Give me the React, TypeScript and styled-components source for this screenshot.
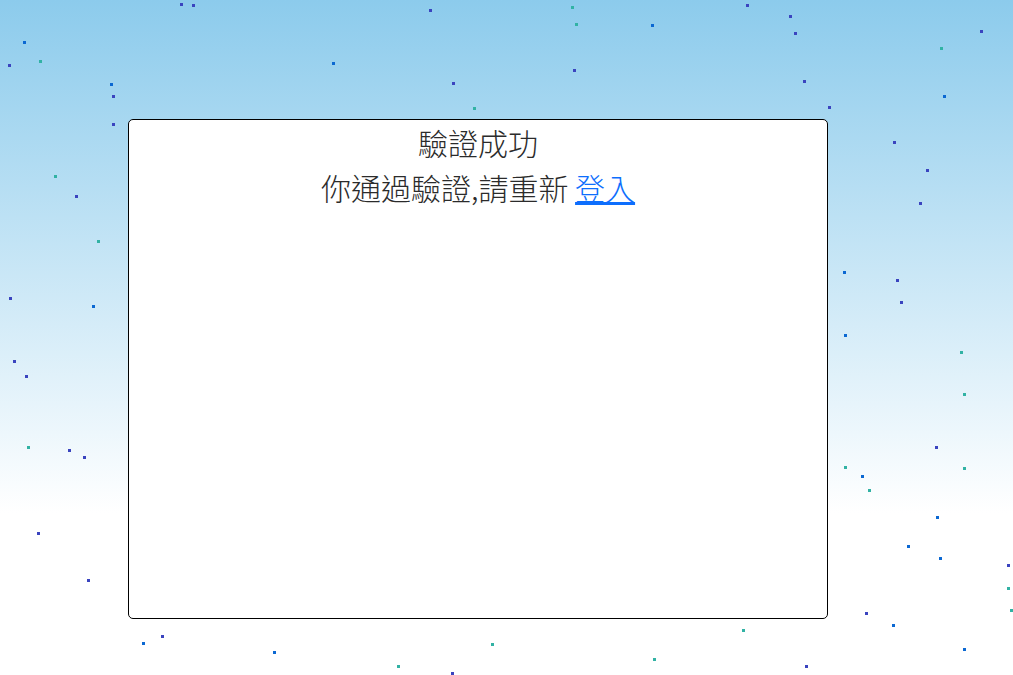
import React from "react";
import styled, { createGlobalStyle } from "styled-components";

const GlobalStyle = createGlobalStyle`
  html, body { margin: 0; padding: 0; }
  body {
    font-family: "Noto Sans CJK TC", "Noto Sans", sans-serif;
    color: #212529;
  }
`;

type Tone = "indigo" | "blue" | "teal";

const toneColor: Record<Tone, string> = {
  indigo: "#3a44bf",
  blue: "#0b68d2",
  teal: "#31b2a4",
};

const dots: [number, number, Tone][] = [
  [181, 4, "indigo"], [193, 5, "indigo"], [24, 42, "blue"], [40, 61, "teal"],
  [9, 65, "indigo"], [111, 84, "blue"], [113, 96, "indigo"], [113, 124, "indigo"],
  [430, 10, "indigo"], [572, 7, "teal"], [576, 24, "teal"], [652, 25, "blue"],
  [453, 83, "indigo"], [574, 70, "indigo"], [474, 108, "teal"], [333, 63, "blue"],
  [747, 5, "indigo"], [790, 16, "indigo"], [795, 33, "indigo"], [804, 81, "indigo"],
  [981, 31, "indigo"], [941, 48, "teal"], [944, 96, "blue"], [829, 107, "indigo"],
  [894, 142, "indigo"], [927, 170, "indigo"], [920, 203, "indigo"], [844, 272, "blue"],
  [897, 280, "indigo"], [901, 302, "indigo"], [845, 335, "blue"], [961, 352, "teal"],
  [964, 394, "teal"],
  [55, 176, "teal"], [76, 196, "indigo"], [98, 241, "teal"], [10, 298, "indigo"],
  [93, 306, "blue"], [14, 361, "indigo"], [26, 376, "indigo"], [28, 447, "teal"],
  [69, 450, "indigo"], [84, 457, "indigo"], [38, 533, "indigo"], [88, 580, "indigo"],
  [936, 447, "indigo"], [845, 467, "teal"], [862, 476, "blue"], [964, 468, "teal"],
  [869, 490, "teal"], [937, 517, "blue"], [908, 546, "blue"], [940, 558, "blue"],
  [1008, 565, "indigo"], [1008, 588, "teal"], [1011, 610, "teal"], [866, 613, "indigo"],
  [893, 625, "blue"], [964, 649, "blue"],
  [143, 643, "blue"], [162, 636, "indigo"], [274, 652, "blue"], [398, 666, "teal"],
  [452, 673, "indigo"], [492, 644, "teal"], [654, 659, "teal"], [743, 630, "teal"],
  [806, 666, "indigo"],
];

const Page = styled.div`
  position: relative;
  width: 100%;
  height: 100vh;
  overflow: hidden;
  background: linear-gradient(to bottom, #8ccbec 0%, #ffffff 76%, #ffffff 100%);
  display: flex;
  flex-direction: column;
  align-items: flex-start;
  padding: 119px 0 0 128px;
  box-sizing: border-box;
`;

const Dot = styled.span<{ $tone: Tone }>`
  position: absolute;
  width: 3px;
  height: 3px;
  background: ${(p) => toneColor[p.$tone]};
  box-shadow: 0 0 0.5px ${(p) => toneColor[p.$tone]};
`;

const Card = styled.main`
  position: relative;
  z-index: 1;
  width: 700px;
  height: 500px;
  box-sizing: border-box;
  border: 1px solid #000;
  border-radius: 5px;
  background: #fff;
  display: flex;
  flex-direction: column;
  align-items: center;
`;

const Title = styled.h1`
  margin: 0;
  font-size: 30px;
  line-height: 45px;
  font-weight: 300;
  color: #2b2b2b;
`;

const Message = styled.p`
  margin: 0;
  font-size: 30px;
  line-height: 45px;
  font-weight: 300;
  color: #2b2b2b;
`;

const LoginLink = styled.a`
  color: #0d6efd;
  text-decoration: underline;
  cursor: pointer;
`;

export default function App() {
  return (
    <>
      <GlobalStyle />
      <Page>
        {dots.map(([x, y, tone], i) => (
          <Dot
            key={i}
            $tone={tone}
            style={{ left: x - 1.5, top: y - 1.5 }}
          />
        ))}
        <Card>
          <Title>驗證成功</Title>
          <Message>
            你通過驗證,請重新 <LoginLink href="#">登入</LoginLink>
          </Message>
        </Card>
      </Page>
    </>
  );
}
